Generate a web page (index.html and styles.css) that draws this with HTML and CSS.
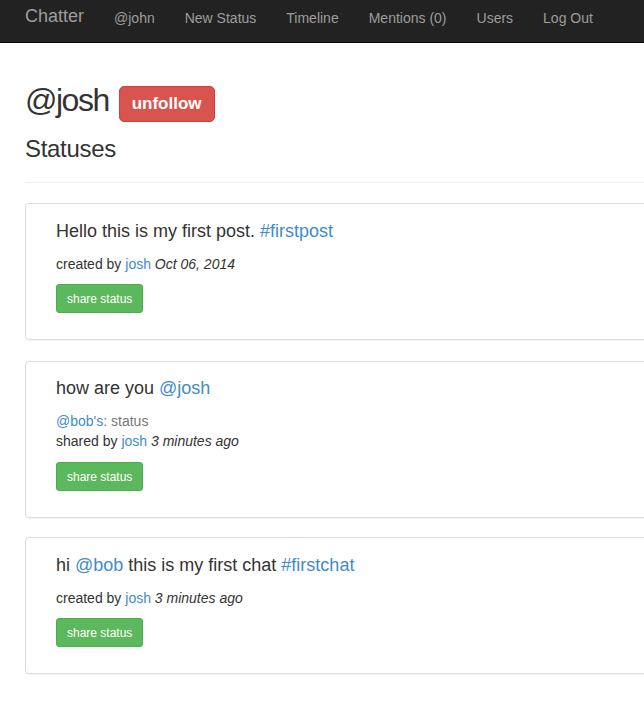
FILE: index.html
```html
<!DOCTYPE html>
<html>
<head>
<meta charset="utf-8">
<title>Chatter</title>
<link rel="stylesheet" href="styles.css">
</head>
<body>
<nav class="navbar">
  <a class="brand" href="#">Chatter</a>
  <a class="nav-link" href="#">@john</a>
  <a class="nav-link" href="#">New Status</a>
  <a class="nav-link" href="#">Timeline</a>
  <a class="nav-link" href="#">Mentions (0)</a>
  <a class="nav-link" href="#">Users</a>
  <a class="nav-link" href="#">Log Out</a>
</nav>
<main class="container">
  <div class="profile-head">
    <h1 class="username">@josh</h1>
    <button class="btn-unfollow">unfollow</button>
  </div>
  <h3 class="section-title">Statuses</h3>
  <hr class="divider">

  <div class="panel panel-first">
    <p class="status-text">Hello this is my first post. <a class="link" href="#">#firstpost</a></p>
    <p class="meta">created by <a class="link" href="#">josh</a> <em>Oct 06, 2014</em></p>
    <button class="btn-share">share status</button>
  </div>

  <div class="panel panel-second">
    <p class="status-text">how are you <a class="link" href="#">@josh</a></p>
    <p class="meta shared-src"><a class="link" href="#">@bob's</a>: status</p>
    <p class="meta meta-shared">shared by <a class="link" href="#">josh</a> <em>3 minutes ago</em></p>
    <button class="btn-share">share status</button>
  </div>

  <div class="panel panel-last">
    <p class="status-text">hi <a class="link" href="#">@bob</a> this is my first chat <a class="link" href="#">#firstchat</a></p>
    <p class="meta">created by <a class="link" href="#">josh</a> <em>3 minutes ago</em></p>
    <button class="btn-share">share status</button>
  </div>
</main>
</body>
</html>
```
FILE: styles.css
```css
html, body {
  margin: 0;
  padding: 0;
  overflow-x: hidden;
  background: #fff;
}
body {
  font-family: "Liberation Sans", Arial, sans-serif;
  font-size: 14px;
  line-height: 20px;
  color: #333;
}
a { text-decoration: none; }

.navbar {
  display: flex;
  align-items: flex-start;
  height: 42px;
  background: #222;
  border-bottom: 1px solid #080808;
  padding-left: 10px;
  box-sizing: content-box;
}
.brand {
  font-size: 18px;
  line-height: 20px;
  color: #9d9d9d;
  padding: 6px 15px 0 15px;
}
.nav-link {
  color: #9d9d9d;
  font-size: 14px;
  line-height: 20px;
  padding: 8px 15px 0 15px;
}

.container {
  width: calc(100% + 40px);
  padding: 37px 0 0 25px;
  box-sizing: border-box;
}

.profile-head {
  display: flex;
  align-items: flex-start;
  gap: 10px;
}
.username {
  font-size: 32px;
  font-weight: 400;
  line-height: 40px;
  margin: 0;
  letter-spacing: -1.5px;
}
.btn-unfollow {
  margin-top: 6px;
  height: 36px;
  padding: 0 12px;
  background: #d9534f;
  border: 1px solid #d43f3a;
  border-radius: 5px;
  color: #fff;
  font-family: "Liberation Sans", Arial, sans-serif;
  font-size: 17px;
  font-weight: 700;
}

.section-title {
  font-size: 24px;
  font-weight: 400;
  line-height: 26px;
  margin: 14px 0 0 0;
  letter-spacing: -0.3px;
}
.divider {
  margin: 20px 0 20px 0;
  border: 0;
  border-top: 1px solid #eee;
}

.panel {
  border: 1px solid #ddd;
  border-radius: 4px;
  box-shadow: 0 1px 1px rgba(0,0,0,0.05);
  padding: 17px 20px 26px 30px;
  margin-bottom: 20px;
}
.panel-first { margin-bottom: 21px; }
.panel-second { padding-top: 16px; margin-bottom: 19px; }

.status-text {
  font-size: 18px;
  line-height: 20px;
  margin: 0 0 13px 0;
}
.link { color: #428bca; }
.meta {
  margin: 0 0 10px 0;
}
.shared-src { color: #777; margin-bottom: 0; }
.meta-shared { margin-bottom: 11px; }
.meta em { font-style: italic; }

.btn-share {
  display: block;
  height: 29px;
  padding: 0 10px;
  background: #5cb85c;
  border: 1px solid #4cae4c;
  border-radius: 3px;
  color: #fff;
  font-family: "Liberation Sans", Arial, sans-serif;
  font-size: 12px;
  font-weight: 400;
}
```
